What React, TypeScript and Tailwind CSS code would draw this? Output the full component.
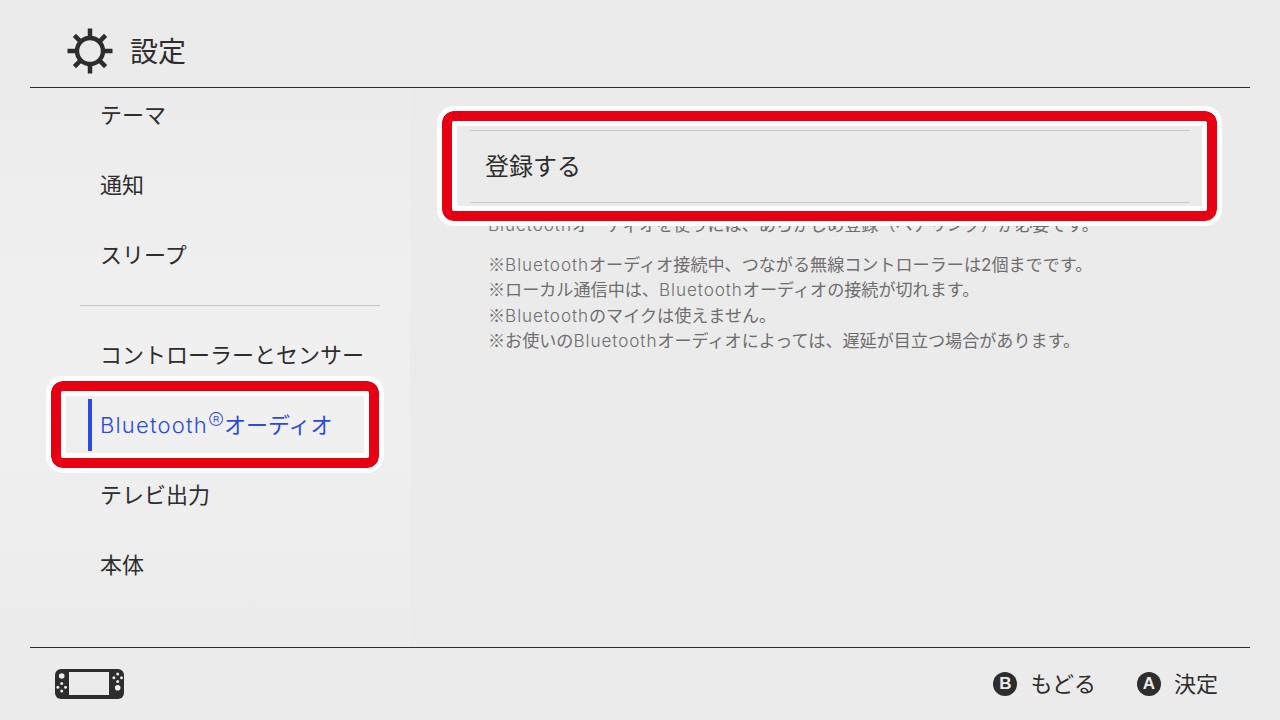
const font = { fontFamily: '"Inter", "Noto Sans CJK JP", sans-serif' };
const cjk = { fontFamily: '"Noto Sans CJK JP", sans-serif' };

function GearIcon() {
  return (
    <svg width="48" height="48" viewBox="0 0 48 48" className="text-[#2d2d2d]">
      <circle cx="24" cy="24" r="13" fill="none" stroke="currentColor" strokeWidth="4.4" />
      <g stroke="currentColor" strokeWidth="4.5">
        <path d="M24 1.5v9M24 37.5v9M1.5 24h9M37.5 24h9M8.4 8.4l6 6M33.6 33.6l6 6M8.4 39.6l6-6M33.6 14.4l6-6" />
      </g>
    </svg>
  );
}

function ConsoleIcon() {
  return (
    <svg width="69" height="30" viewBox="0 0 69 30">
      <rect x="0" y="0" width="69" height="30" rx="6" fill="#2d2d2d" />
      <rect x="14" y="3" width="40" height="23" fill="#ebebeb" />
      <g fill="#ebebeb">
        <circle cx="6.7" cy="7" r="2.8" />
        <circle cx="6.7" cy="14.5" r="1.5" />
        <circle cx="6.7" cy="22" r="1.5" />
        <circle cx="2.9" cy="18.2" r="1.5" />
        <circle cx="10.5" cy="18.2" r="1.5" />
        <circle cx="62.7" cy="5" r="1.5" />
        <circle cx="62.7" cy="12.4" r="1.5" />
        <circle cx="58.9" cy="8.7" r="1.5" />
        <circle cx="66.5" cy="8.7" r="1.5" />
        <circle cx="62.7" cy="18.7" r="2.8" />
      </g>
    </svg>
  );
}

function BT() {
  return <span className="tracking-[0.055em] font-light">Bluetooth</span>;
}

function Mark() {
  return <span style={cjk}>※</span>;
}

function NavItem({ label }: { label: string }) {
  return <div className="h-[70px] flex items-center pl-5 text-[22px] text-[#2d2d2d]">{label}</div>;
}

function Hint({ glyph, label }: { glyph: string; label: string }) {
  return (
    <div className="flex items-center gap-[13px]">
      <span
        className="w-6 h-6 rounded-full bg-[#2d2d2d] text-[#ebebeb] text-[17px] font-bold flex items-center justify-center"
        style={{ fontFamily: '"Liberation Sans", sans-serif' }}
      >
        {glyph}
      </span>
      <span className="text-[22px] text-[#2d2d2d] pt-[1px]">{label}</span>
    </div>
  );
}

export default function App() {
  return (
    <div className="w-[1280px] h-[720px] bg-[#ebebeb] flex flex-col overflow-hidden font-normal" style={font}>
      <header className="h-[88px] mx-[30px] shrink-0 flex items-center gap-[16px] pl-[36px] pt-[15px] border-b border-[#2d2d2d]">
        <GearIcon />
        <div className="text-[28px] text-[#2d2d2d] pt-[1px]">設定</div>
      </header>

      <main className="h-[559px] flex overflow-hidden">
        <nav className="w-[410px] pl-[80px] pr-[30px] -mt-2 bg-linear-to-b from-[#ececec] via-[#f0f0f0] to-[#ececec]">
          <NavItem label="テーマ" />
          <NavItem label="通知" />
          <NavItem label="スリープ" />
          <div className="h-px bg-[#c8c8c8] mt-[15px] mb-[14px]" />
          <NavItem label="コントローラーとセンサー" />
          <div className="relative h-[70px] flex items-center pl-5 text-[22px] text-[#2b4ae0] bg-[#f0f0f0]">
            <span className="absolute left-2 top-[9px] w-1 h-[52px] bg-[#2b4ae0]" />
            <span>
              <BT />
              <span className="text-[24px] font-extralight leading-none relative -top-[3px]">®</span>オーディオ
            </span>
            <div className="absolute -left-[29px] right-px -top-[9px] -bottom-[8px] rounded-[12px] border-[10px] border-[#e60012] outline-[5px] outline-white">
              <div className="w-full h-full border-[5px] border-white rounded-[3px]" />
            </div>
          </div>
          <NavItem label="テレビ出力" />
          <NavItem label="本体" />
        </nav>

        <section className="relative flex-1 pt-[42px] pl-[60px] pr-[90px]">
          <div className="border-y border-[#c8c8c8] h-[73px] flex items-center pl-[15px] pt-[1px] text-[24px] text-[#2d2d2d]">
            登録する
          </div>
          <div className="mt-[9px] pl-[18px] text-[17.1px] leading-[25.6px] text-[#6e6e6e]">
            <p className="h-[25.6px] mb-[13px]"><BT />オーディオを使うには、あらかじめ登録（ペアリング）が必要です。</p>
            <p className="h-[25.6px]"><Mark /><BT />オーディオ接続中、つながる無線コントローラーは2個までです。</p>
            <p className="h-[25.6px]"><Mark />ローカル通信中は、<BT />オーディオの接続が切れます。</p>
            <p className="h-[25.6px]"><Mark /><BT />のマイクは使えません。</p>
            <p className="h-[25.6px]"><Mark />お使いの<BT />オーディオによっては、遅延が目立つ場合があります。</p>
          </div>
          <div className="absolute left-[32px] top-[23px] w-[775px] h-[110px] rounded-[12px] border-[10px] border-[#e60012] outline-[5px] outline-white">
            <div className="w-full h-full border-[5px] border-white rounded-[3px]" />
          </div>
        </section>
      </main>

      <footer className="flex-1 mx-[30px] border-t border-[#2d2d2d] flex items-center justify-between pl-[25px] pr-[32px]">
        <ConsoleIcon />
        <div className="flex items-center gap-[41px]">
          <Hint glyph="B" label="もどる" />
          <Hint glyph="A" label="決定" />
        </div>
      </footer>
    </div>
  );
}
